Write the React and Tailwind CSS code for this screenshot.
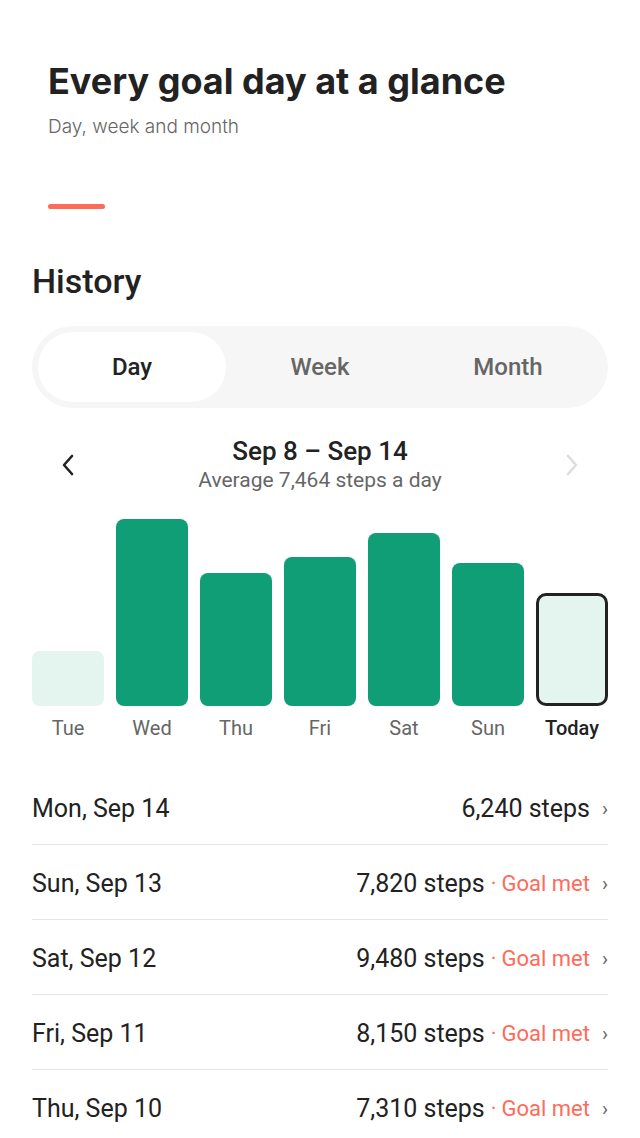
import React from "react";

const bars = [
  { label: "Tue", h: 55, kind: "light" },
  { label: "Wed", h: 187, kind: "met" },
  { label: "Thu", h: 133, kind: "met" },
  { label: "Fri", h: 149, kind: "met" },
  { label: "Sat", h: 173, kind: "met" },
  { label: "Sun", h: 143, kind: "met" },
  { label: "Today", h: 113, kind: "today" },
];

const rows = [
  { date: "Mon, Sep 14", steps: "6,240 steps", met: false },
  { date: "Sun, Sep 13", steps: "7,820 steps", met: true },
  { date: "Sat, Sep 12", steps: "9,480 steps", met: true },
  { date: "Fri, Sep 11", steps: "8,150 steps", met: true },
  { date: "Thu, Sep 10", steps: "7,310 steps", met: true },
];

function Chevron({ dir, color }) {
  return (
    <svg width="14" height="22" viewBox="0 0 14 22" fill="none">
      {dir === "left" ? (
        <path d="M11 2 L3 11 L11 20" stroke={color} strokeWidth="2.6" strokeLinecap="round" strokeLinejoin="round" />
      ) : (
        <path d="M3 2 L11 11 L3 20" stroke={color} strokeWidth="2.6" strokeLinecap="round" strokeLinejoin="round" />
      )}
    </svg>
  );
}

export default function App() {
  return (
    <div className="min-h-[1138px] w-[640px] overflow-hidden bg-white font-['Roboto',sans-serif] text-[#222222]">
      <div className="pl-12 pt-[59px]">
        <h1 className="font-['Inter',sans-serif] text-[36px] font-bold leading-[44px] text-[#222222]">
          Every goal day at a glance
        </h1>
        <p className="mt-[10px] font-['Inter',sans-serif] text-[19px] font-light leading-7 text-[#666666]">
          Day, week and month
        </p>
        <div className="mt-[63px] h-[5px] w-[57px] rounded-full bg-[#ff6b5a]" />
      </div>

      <div className="px-8">
        <h2 className="mt-[52px] text-[34px] font-medium leading-10 text-[#222222]">History</h2>

        <div className="mt-[25px] grid h-[82px] grid-cols-3 rounded-full bg-[#f6f6f6] p-[6px]">
          <div className="flex items-center justify-center rounded-full bg-white text-[24px] font-medium text-[#222222]">
            Day
          </div>
          <div className="flex items-center justify-center text-[24px] font-medium text-[#666666]">Week</div>
          <div className="flex items-center justify-center text-[24px] font-medium text-[#666666]">Month</div>
        </div>

        <div className="mt-[28px] flex items-center">
          <div className="flex w-[72px] justify-center">
            <Chevron dir="left" color="#222222" />
          </div>
          <div className="flex flex-1 flex-col items-center">
            <div className="text-[26px] font-medium leading-[30px] text-[#222222]">Sep 8 – Sep 14</div>
            <div className="text-[21px] leading-7 text-[#666666]">Average 7,464 steps a day</div>
          </div>
          <div className="flex w-[72px] justify-center">
            <Chevron dir="right" color="#dddddd" />
          </div>
        </div>

        <div className="mt-[25px] flex h-[187px] items-end gap-3">
          {bars.map((b) => (
            <div
              key={b.label}
              className={
                b.kind === "met"
                  ? "w-[72px] rounded-[8px] bg-[#0f9e76]"
                  : b.kind === "light"
                  ? "w-[72px] rounded-[8px] bg-[#e3f5ee]"
                  : "w-[72px] rounded-[10px] border-[3px] border-[#222222] bg-[#e3f5ee]"
              }
              style={{ height: b.h }}
            />
          ))}
        </div>
        <div className="mt-[10px] flex gap-3">
          {bars.map((b) => (
            <div
              key={b.label}
              className={
                b.kind === "today"
                  ? "w-[72px] text-center text-[20px] font-medium leading-6 text-[#222222]"
                  : "w-[72px] text-center text-[20px] leading-6 text-[#666666]"
              }
            >
              {b.label}
            </div>
          ))}
        </div>

        <div className="mt-[30px]">
          {rows.map((r) => (
            <div key={r.date} className="flex h-[75px] items-center justify-between border-b border-[#e6e6e6] pt-[3px]">
              <span className="text-[25px] text-[#222222]">{r.date}</span>
              <span className="flex items-center">
                <span className="text-[25px] text-[#222222]">{r.steps}</span>
                {r.met && (
                  <span className="ml-[6px] text-[22px] text-[#ff6b5a]">
                    <span className="mr-[5px]">·</span>Goal met
                  </span>
                )}
                <span className="ml-[12px] text-[20px] text-[#666666]">›</span>
              </span>
            </div>
          ))}
        </div>
      </div>
    </div>
  );
}
